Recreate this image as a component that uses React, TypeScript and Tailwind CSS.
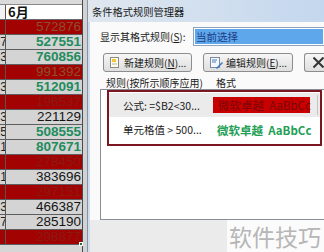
import React from "react";

type Row = { v: string; t: "r" | "g" | "b"; a: string; dim?: boolean };

const rows: Row[] = [
  { v: "572876", t: "r", a: "" },
  { v: "527551", t: "g", a: "7" },
  { v: "760856", t: "g", a: "3" },
  { v: "991392", t: "r", a: "" },
  { v: "512091", t: "g", a: "3" },
  { v: "196537", t: "r", a: "", dim: true },
  { v: "221129", t: "b", a: "3" },
  { v: "508555", t: "g", a: "5" },
  { v: "807671", t: "g", a: "1" },
  { v: "278450", t: "r", a: "", dim: true },
  { v: "383696", t: "b", a: "1" },
  { v: "297151", t: "r", a: "", dim: true },
  { v: "466387", t: "b", a: "3" },
  { v: "285190", t: "b", a: "7" },
  { v: "298877", t: "r", a: "", dim: true },
];

const num = { fontFamily: "'Liberation Sans', Arial, sans-serif" };
const cjk = { fontFamily: "'Noto Sans CJK SC', 'Liberation Sans', sans-serif" };

function Sheet() {
  return (
    <div className="relative w-[82px] flex flex-col bg-[#cfcfcf]" style={num}>
      <div className="h-[5px] bg-[#dadada] border-b border-[#8a8a8a]" />
      <div className="h-[15px] flex bg-white border-b border-[#6a6a6a]">
        <div className="w-[6px] border-r border-[#555] bg-[#f2f2f2]" />
        <div className="flex-1 pl-[2px] text-[13px] leading-[14px] font-bold text-[#111]" style={cjk}>
          6月
        </div>
      </div>
      {rows.map((r, i) => {
        const bg = r.t === "r" ? "bg-[#a30202]" : "bg-[#d4d4d4]";
        const color =
          r.t === "r"
            ? r.dim
              ? "text-[#8a1a12]"
              : "text-[#8e4f2e]"
            : r.t === "g"
            ? "text-[#1f8c5e] font-bold"
            : "text-[#151515]";
        return (
          <div key={i} className={`h-[15px] flex border-b border-[#5e5e5e] ${bg}`}>
            <div className="w-[6px] border-r border-[#555] overflow-hidden flex justify-end">
              <span className="text-[12px] leading-[14px] text-[#222] shrink-0 -mr-[2px]">{r.a}</span>
            </div>
            <div className={`flex-1 text-right pr-[1px] text-[13.5px] leading-[14px] ${color}`}>{r.v}</div>
          </div>
        );
      })}
      <div className="flex-1 bg-[#d6d6d6]" />
      <div className="absolute left-[79px] top-[242px] w-[4px] h-[4px] bg-[#1d6a3a] border border-white" />
    </div>
  );
}

function NewIcon() {
  return (
    <svg width="9" height="11" viewBox="0 0 9 11">
      <rect x="0.5" y="0.5" width="8" height="10" fill="#fffbe6" stroke="#8a8a8a" />
      <rect x="2" y="2" width="4" height="3" fill="#f3c53a" />
      <line x1="2" y1="7" x2="7" y2="7" stroke="#b0b0b0" />
    </svg>
  );
}

function EditIcon() {
  return (
    <svg width="13" height="12" viewBox="0 0 13 12">
      <rect x="0.5" y="0.5" width="9" height="10" fill="#f4f8ff" stroke="#7d8aa0" />
      <line x1="2" y1="3" x2="7" y2="3" stroke="#4a7ac0" />
      <line x1="2" y1="5" x2="6" y2="5" stroke="#4a7ac0" />
      <path d="M6 11 L12 5 L13 6 L7 12 Z" fill="#3a78c8" />
    </svg>
  );
}

function Dialog() {
  return (
    <div className="flex-1 flex flex-col border-l border-[#8493a6] bg-[#cfdeee]" style={cjk}>
      <div className="h-[22px] flex items-center pl-[4px] bg-gradient-to-r from-[#e0e7ef] to-[#c3d7ee] text-[10.25px] leading-[13px] text-[#1a1a1a] whitespace-nowrap">
        条件格式规则管理器
      </div>
      <div className="ml-[2px] flex-1 flex flex-col bg-[#fafafa]">
        <div className="mt-[5px] h-[19px] flex items-center">
          <div className="w-[103px] shrink-0 pl-[10px] text-[10px] leading-[13px] text-[#1a1a1a] whitespace-nowrap">
            显示其格式规则(<u>S</u>):
          </div>
          <div className="flex-1 h-[19px] border border-[#8da3bd] border-r-0 p-[1px] bg-white">
            <div className="h-full bg-[#5ea7eb] flex items-center pl-[1px] text-[10.5px] leading-[13px] text-[#1c3d86] whitespace-nowrap">
              当前选择
            </div>
          </div>
        </div>
        <div className="mt-[7px] h-[19px] flex pl-[13px] gap-[11px]">
          <div className="w-[89px] h-[19px] shrink-0 rounded-[3px] border border-[#8d8d8d] bg-gradient-to-b from-[#f6f6f6] to-[#dedede] flex items-center pl-[6px] gap-[5px] text-[10px] leading-[13px] text-[#1a1a1a] whitespace-nowrap">
            <NewIcon />
            <span>
              新建规则(<u>N</u>)...
            </span>
          </div>
          <div className="w-[90px] h-[19px] shrink-0 rounded-[3px] border border-[#8d8d8d] bg-gradient-to-b from-[#f6f6f6] to-[#dedede] flex items-center pl-[6px] gap-[3px] text-[10px] leading-[13px] text-[#1a1a1a] whitespace-nowrap">
            <EditIcon />
            <span>
              编辑规则(<u>E</u>)...
            </span>
          </div>
          <div className="flex-1 h-[19px] rounded-l-[3px] border border-r-0 border-[#8d8d8d] bg-gradient-to-b from-[#f6f6f6] to-[#dedede] flex items-center pl-[8px]">
            <svg width="11" height="11" viewBox="0 0 11 11">
              <path d="M0.5 0.5 L10.5 10.5 M10.5 0.5 L0.5 10.5" stroke="#333" strokeWidth="2" />
            </svg>
          </div>
        </div>
        <div className="mt-[4px] h-[13px] flex items-center text-[10px] leading-[13px] text-[#1a1a1a] whitespace-nowrap">
          <div className="w-[126px] shrink-0 pl-[16px]">规则(按所示顺序应用)</div>
          <div>格式</div>
        </div>
        <div className="ml-[10px] h-[131px] border border-r-0 border-[#888d96] bg-white pl-[6px]">
          <div className="w-[215px] h-[56px] border-2 border-[#7c1722] pt-[1px]">
            <div className="h-[24px] bg-[#ebebeb] flex items-center">
              <div className="w-[104px] shrink-0 pl-[14px] text-[10.5px] leading-[13px] text-[#1a1a1a] whitespace-nowrap">
                公式: =$B2&lt;30...
              </div>
              <div className="w-[97px] shrink-0 h-[16px] bg-[#c90000] flex items-center pl-[5px] text-[11.5px] leading-[14px] text-[#7a0606] whitespace-nowrap">
                微软卓越&nbsp;&nbsp;AaBbCc
              </div>
              <div className="ml-[7px] w-px h-[20px] bg-[#c4c4c4]" />
            </div>
            <div className="h-[25px] flex items-center">
              <div className="w-[104px] shrink-0 pl-[14px] text-[10.5px] leading-[13px] text-[#1a1a1a] whitespace-nowrap">
                单元格值 &gt; 500...
              </div>
              <div className="w-[97px] shrink-0 flex items-center pl-[4px] text-[11.5px] leading-[14px] text-[#22a055] font-bold whitespace-nowrap">
                微软卓越&nbsp;&nbsp;AaBbCc
              </div>
            </div>
          </div>
        </div>
        <div className="flex-1 bg-[#ebebeb]" />
      </div>
    </div>
  );
}

export default function App() {
  return (
    <div className="relative w-[324px] h-[252px] overflow-hidden flex bg-[#d8d8d8]">
      <Sheet />
      <div className="w-px bg-[#4a4a4a]" />
      <div className="w-[4px] bg-[#d2d2d2]" />
      <Dialog />
      <div
        className="absolute right-0 bottom-0 w-[97px] h-[32px] bg-[#fbfbfb] flex items-center pl-[2px] text-[23px] leading-[26px] text-[#b6b6b6] whitespace-nowrap"
        style={cjk}
      >
        软件技巧
      </div>
    </div>
  );
}
